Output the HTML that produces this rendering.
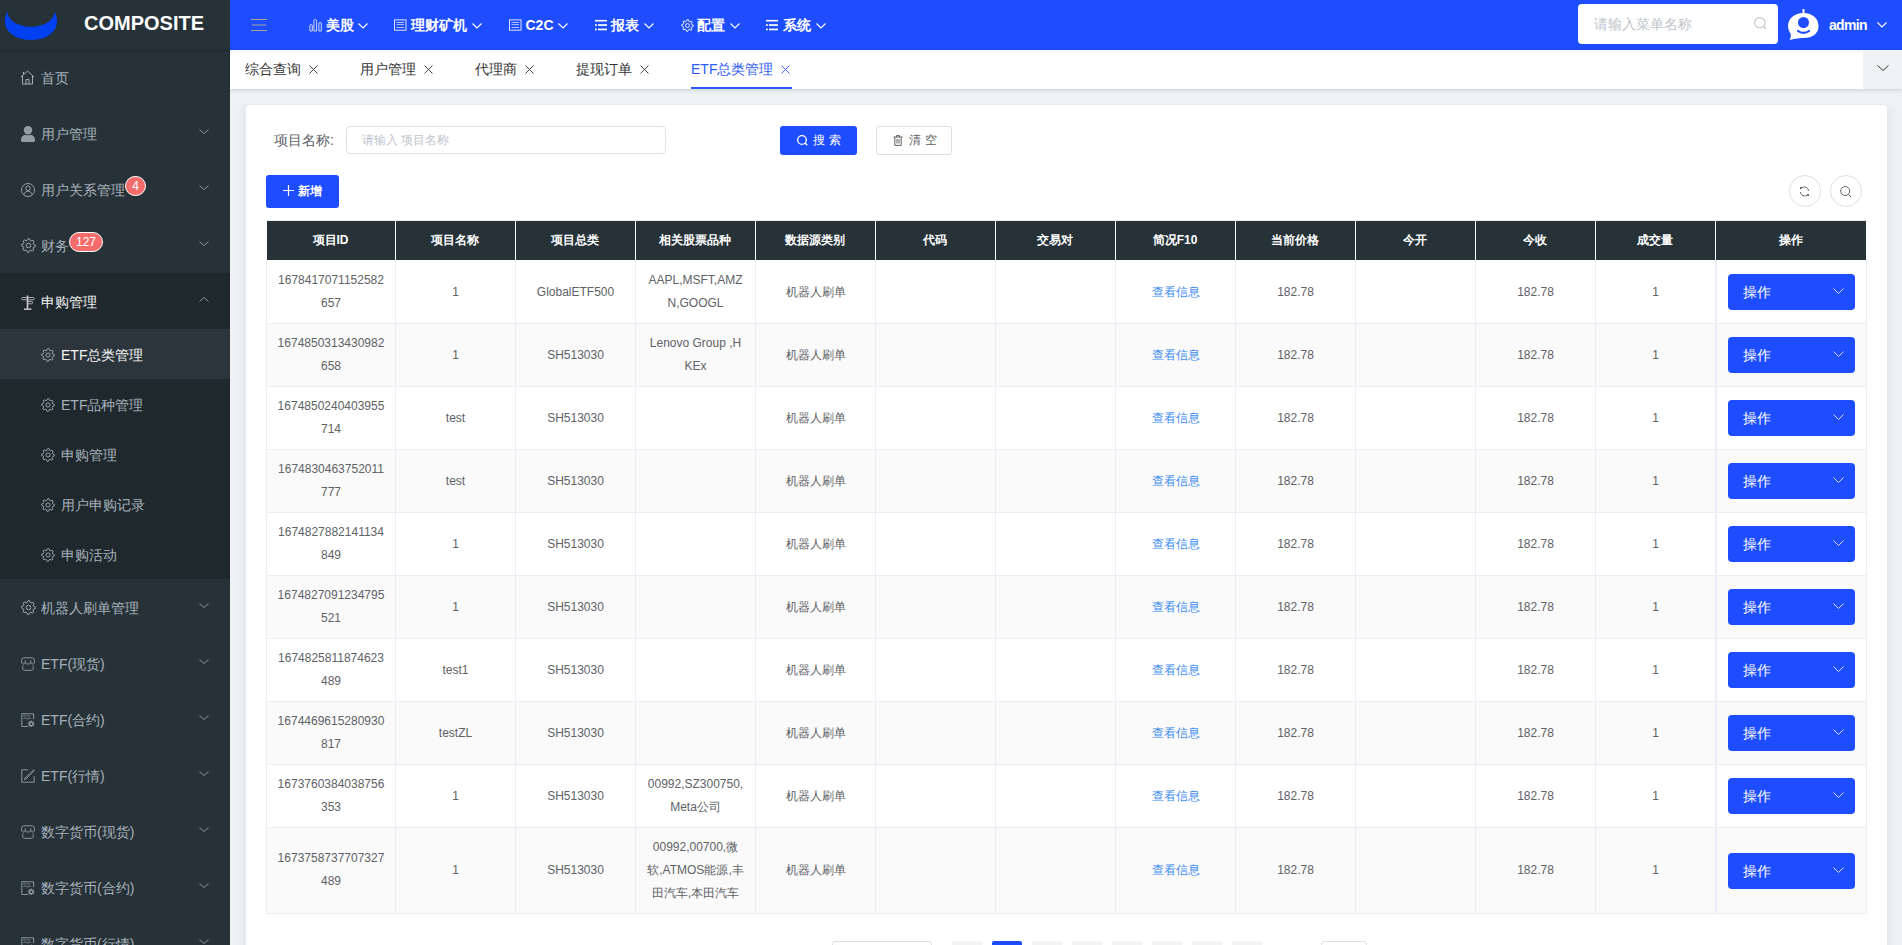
<!DOCTYPE html>
<html><head><meta charset="utf-8">
<style>
*{box-sizing:border-box;margin:0;padding:0}
html,body{width:1902px;height:945px;overflow:hidden;background:#eff2f4;font-family:"Liberation Sans",sans-serif;font-size:14px;color:#606266;position:relative}
.abs{position:absolute}
#side{position:absolute;left:0;top:0;width:230px;height:945px;background:#263238;overflow:hidden}
#logo{position:absolute;left:0;top:0;width:230px;height:50px;background:#263238;box-shadow:0 1px 1px rgba(0,0,0,.18);z-index:2}
#logo .t{position:absolute;left:84px;top:12px;font-size:20px;font-weight:bold;color:#fff}
.mi{position:absolute;left:0;width:230px;height:56px;line-height:56px;font-size:14px}
.mi .tx{position:absolute;left:41px;top:1px}
.smi{position:absolute;left:0;width:230px;height:50px;line-height:50px;font-size:14px}
.smi .tx{position:absolute;left:61px;top:1px}
.badge{position:absolute;height:20px;line-height:18px;border-radius:10px;background:#f56c6c;border:1px solid #fff;color:#fff;font-size:12px;text-align:center}
#hdr{position:absolute;left:230px;top:0;width:1672px;height:50px;background:#1e4dff}
.nav{position:absolute;top:0;height:50px;line-height:50px;color:#fff;font-weight:bold;font-size:14px}
#tabs{position:absolute;left:230px;top:50px;width:1672px;height:39px;background:#fff;box-shadow:0 1px 4px rgba(0,0,0,.15), inset 0 3px 3px -1px rgba(0,21,41,.04)}
.tab{position:absolute;top:50px;height:39px;line-height:39px;font-size:14px}
#cw{position:absolute;left:230px;top:104px;width:1672px;height:841px;overflow:hidden}
#card{position:absolute;left:15px;top:0;width:1643px;height:900px;background:#fff;border:1px solid #e6e9f2;border-radius:4px;box-shadow:0 2px 12px rgba(0,0,0,.08)}
.th{position:absolute;top:221px;height:39px;line-height:39px;text-align:center;color:#fff;font-weight:bold;font-size:12px}
.td{position:absolute;padding:1px 0 0 1px;display:flex;align-items:center;justify-content:center;text-align:center;font-size:12px;line-height:23px;color:#606266}
.opb{width:127px;height:36px;line-height:36px;background:#1e4dff;border-radius:4px;color:#fff;font-size:14px;padding-left:15px}
</style></head><body>
<div id="side">
<div id="logo"><svg class="abs" style="left:4px;top:11px" width="54" height="30" viewBox="0 0 54 30"><path d="M3.3 0.5 C1 6 0 11 2 16 C6 25 16 29 27 29 C38 29 48 25 52 16 C54 11 53 6 50.7 0.5 C50 7 45 12 38 14 C34 15.3 30 15.8 27 15.8 C24 15.8 20 15.3 16 14 C9 12 4 7 3.3 0.5Z" fill="#0040f0"/></svg><div class="t">COMPOSITE</div></div>
<div class="mi" style="top:49px;color:#a6b0ba"><span class="tx">首页</span></div>
<svg class="abs" style="left:20px;top:70px" width="15" height="15" viewBox="0 0 15 15"><path d="M1 7 L7.5 1 L14 7 M2.5 6 V14 H12.5 V6 M6 14 V9.5 H9 V14" fill="none" stroke="#a3acb4" stroke-width="1" stroke-linejoin="round"/><path d="M3.5 2 V4.5" stroke="#a3acb4" stroke-width="1.2"/></svg>
<div class="mi" style="top:105px;color:#a6b0ba"><span class="tx">用户管理</span></div>
<svg class="abs" style="left:21px;top:126px" width="14" height="16" viewBox="0 0 14 16"><circle cx="7" cy="4.3" r="4.2" fill="#949ca3"/><path d="M0 14.5 C0 10.5 2 9 4.5 8.7 C5.5 9.4 8.5 9.4 9.5 8.7 C12 9 14 10.5 14 14.5 C14 15.5 13 16 12 16 H2 C1 16 0 15.5 0 14.5Z" fill="#949ca3"/></svg>
<svg class="abs" style="left:199px;top:129px;overflow:visible" width="10" height="5" viewBox="0 0 10 5"><polyline points="0.5,0.5 5.0,4.5 9.5,0.5" fill="none" stroke="#8a949b" stroke-width="1"/></svg>
<div class="mi" style="top:161px;color:#a6b0ba"><span class="tx">用户关系管理</span></div>
<svg class="abs" style="left:21px;top:183px" width="14" height="14" viewBox="0 0 14 14"><circle cx="7" cy="7" r="6.5" fill="none" stroke="#a3acb4" stroke-width="0.9"/><circle cx="7" cy="5.3" r="2.3" fill="none" stroke="#a3acb4" stroke-width="0.9"/><path d="M2.8 11.8 C3.5 9.5 5 8.2 7 8.2 C9 8.2 10.5 9.5 11.2 11.8" fill="none" stroke="#a3acb4" stroke-width="0.9"/></svg>
<svg class="abs" style="left:199px;top:185px;overflow:visible" width="10" height="5" viewBox="0 0 10 5"><polyline points="0.5,0.5 5.0,4.5 9.5,0.5" fill="none" stroke="#8a949b" stroke-width="1"/></svg>
<div class="badge" style="left:125px;top:176px;width:21px">4</div>
<div class="mi" style="top:217px;color:#a6b0ba"><span class="tx">财务</span></div>
<svg class="abs" style="left:21px;top:238px" width="15" height="15" viewBox="0 0 15 15"><path d="M7.16 0.61 L8.51 0.67 L9.29 2.51 L10.22 2.95 L12.13 2.39 L13.04 3.39 L12.29 5.23 L12.64 6.21 L14.39 7.16 L14.33 8.51 L12.49 9.29 L12.05 10.22 L12.61 12.13 L11.61 13.04 L9.77 12.29 L8.79 12.64 L7.84 14.39 L6.49 14.33 L5.71 12.49 L4.78 12.05 L2.87 12.61 L1.96 11.61 L2.71 9.77 L2.36 8.79 L0.61 7.84 L0.67 6.49 L2.51 5.71 L2.95 4.78 L2.39 2.87 L3.39 1.96 L5.23 2.71 L6.21 2.36Z" fill="none" stroke="#a3acb4" stroke-width="1.0" stroke-linejoin="round"/><circle cx="7.5" cy="7.5" r="2.25" fill="none" stroke="#a3acb4" stroke-width="1.0"/></svg>
<svg class="abs" style="left:199px;top:241px;overflow:visible" width="10" height="5" viewBox="0 0 10 5"><polyline points="0.5,0.5 5.0,4.5 9.5,0.5" fill="none" stroke="#8a949b" stroke-width="1"/></svg>
<div class="badge" style="left:69px;top:232px;width:34px">127</div>
<div class="mi" style="top:273px;background:#1f282d;color:#f4f4f5"><span class="tx">申购管理</span></div>
<svg class="abs" style="left:21px;top:295px" width="14" height="15" viewBox="0 0 14 15"><path d="M6.5 0.5 V14" stroke="#c8cdd1" stroke-width="1.6"/><path d="M3 14.2 H10.5" stroke="#c8cdd1" stroke-width="1.4"/><path d="M6.5 2.5 H12 C14 2.5 14 4.8 12 4.8 H2 C0 4.8 0 2.5 2 2.5Z" fill="none" stroke="#b7bec3" stroke-width="0.9"/><path d="M6.5 6.5 H10.5 C12 6.5 12 8.8 10.5 8.8 H6.5" fill="none" stroke="#b7bec3" stroke-width="0.9"/></svg>
<svg class="abs" style="left:199px;top:297px;overflow:visible" width="10" height="5" viewBox="0 0 10 5"><polyline points="0.5,4.5 5.0,0.5 9.5,4.5" fill="none" stroke="#8a949b" stroke-width="1"/></svg>
<div class="smi" style="top:329px;background:#2b353b;color:#f4f4f5"><span class="tx">ETF总类管理</span></div>
<svg class="abs" style="left:41px;top:348px" width="14" height="14" viewBox="0 0 14 14"><path d="M6.69 0.61 L7.94 0.67 L8.62 2.48 L9.47 2.88 L11.30 2.26 L12.14 3.19 L11.34 4.95 L11.66 5.83 L13.39 6.69 L13.33 7.94 L11.52 8.62 L11.12 9.47 L11.74 11.30 L10.81 12.14 L9.05 11.34 L8.17 11.66 L7.31 13.39 L6.06 13.33 L5.38 11.52 L4.53 11.12 L2.70 11.74 L1.86 10.81 L2.66 9.05 L2.34 8.17 L0.61 7.31 L0.67 6.06 L2.48 5.38 L2.88 4.53 L2.26 2.70 L3.19 1.86 L4.95 2.66 L5.83 2.34Z" fill="none" stroke="#98a1a9" stroke-width="1.0" stroke-linejoin="round"/><circle cx="7.0" cy="7.0" r="2.10" fill="none" stroke="#98a1a9" stroke-width="1.0"/></svg>
<div class="smi" style="top:379px;background:#1f282d;color:#a6b0ba"><span class="tx">ETF品种管理</span></div>
<svg class="abs" style="left:41px;top:398px" width="14" height="14" viewBox="0 0 14 14"><path d="M6.69 0.61 L7.94 0.67 L8.62 2.48 L9.47 2.88 L11.30 2.26 L12.14 3.19 L11.34 4.95 L11.66 5.83 L13.39 6.69 L13.33 7.94 L11.52 8.62 L11.12 9.47 L11.74 11.30 L10.81 12.14 L9.05 11.34 L8.17 11.66 L7.31 13.39 L6.06 13.33 L5.38 11.52 L4.53 11.12 L2.70 11.74 L1.86 10.81 L2.66 9.05 L2.34 8.17 L0.61 7.31 L0.67 6.06 L2.48 5.38 L2.88 4.53 L2.26 2.70 L3.19 1.86 L4.95 2.66 L5.83 2.34Z" fill="none" stroke="#98a1a9" stroke-width="1.0" stroke-linejoin="round"/><circle cx="7.0" cy="7.0" r="2.10" fill="none" stroke="#98a1a9" stroke-width="1.0"/></svg>
<div class="smi" style="top:429px;background:#1f282d;color:#a6b0ba"><span class="tx">申购管理</span></div>
<svg class="abs" style="left:41px;top:448px" width="14" height="14" viewBox="0 0 14 14"><path d="M6.69 0.61 L7.94 0.67 L8.62 2.48 L9.47 2.88 L11.30 2.26 L12.14 3.19 L11.34 4.95 L11.66 5.83 L13.39 6.69 L13.33 7.94 L11.52 8.62 L11.12 9.47 L11.74 11.30 L10.81 12.14 L9.05 11.34 L8.17 11.66 L7.31 13.39 L6.06 13.33 L5.38 11.52 L4.53 11.12 L2.70 11.74 L1.86 10.81 L2.66 9.05 L2.34 8.17 L0.61 7.31 L0.67 6.06 L2.48 5.38 L2.88 4.53 L2.26 2.70 L3.19 1.86 L4.95 2.66 L5.83 2.34Z" fill="none" stroke="#98a1a9" stroke-width="1.0" stroke-linejoin="round"/><circle cx="7.0" cy="7.0" r="2.10" fill="none" stroke="#98a1a9" stroke-width="1.0"/></svg>
<div class="smi" style="top:479px;background:#1f282d;color:#a6b0ba"><span class="tx">用户申购记录</span></div>
<svg class="abs" style="left:41px;top:498px" width="14" height="14" viewBox="0 0 14 14"><path d="M6.69 0.61 L7.94 0.67 L8.62 2.48 L9.47 2.88 L11.30 2.26 L12.14 3.19 L11.34 4.95 L11.66 5.83 L13.39 6.69 L13.33 7.94 L11.52 8.62 L11.12 9.47 L11.74 11.30 L10.81 12.14 L9.05 11.34 L8.17 11.66 L7.31 13.39 L6.06 13.33 L5.38 11.52 L4.53 11.12 L2.70 11.74 L1.86 10.81 L2.66 9.05 L2.34 8.17 L0.61 7.31 L0.67 6.06 L2.48 5.38 L2.88 4.53 L2.26 2.70 L3.19 1.86 L4.95 2.66 L5.83 2.34Z" fill="none" stroke="#98a1a9" stroke-width="1.0" stroke-linejoin="round"/><circle cx="7.0" cy="7.0" r="2.10" fill="none" stroke="#98a1a9" stroke-width="1.0"/></svg>
<div class="smi" style="top:529px;background:#1f282d;color:#a6b0ba"><span class="tx">申购活动</span></div>
<svg class="abs" style="left:41px;top:548px" width="14" height="14" viewBox="0 0 14 14"><path d="M6.69 0.61 L7.94 0.67 L8.62 2.48 L9.47 2.88 L11.30 2.26 L12.14 3.19 L11.34 4.95 L11.66 5.83 L13.39 6.69 L13.33 7.94 L11.52 8.62 L11.12 9.47 L11.74 11.30 L10.81 12.14 L9.05 11.34 L8.17 11.66 L7.31 13.39 L6.06 13.33 L5.38 11.52 L4.53 11.12 L2.70 11.74 L1.86 10.81 L2.66 9.05 L2.34 8.17 L0.61 7.31 L0.67 6.06 L2.48 5.38 L2.88 4.53 L2.26 2.70 L3.19 1.86 L4.95 2.66 L5.83 2.34Z" fill="none" stroke="#98a1a9" stroke-width="1.0" stroke-linejoin="round"/><circle cx="7.0" cy="7.0" r="2.10" fill="none" stroke="#98a1a9" stroke-width="1.0"/></svg>
<div class="mi" style="top:579px;color:#a6b0ba"><span class="tx">机器人刷单管理</span></div>
<svg class="abs" style="left:21px;top:600px" width="15" height="15" viewBox="0 0 15 15"><path d="M7.16 0.61 L8.51 0.67 L9.29 2.51 L10.22 2.95 L12.13 2.39 L13.04 3.39 L12.29 5.23 L12.64 6.21 L14.39 7.16 L14.33 8.51 L12.49 9.29 L12.05 10.22 L12.61 12.13 L11.61 13.04 L9.77 12.29 L8.79 12.64 L7.84 14.39 L6.49 14.33 L5.71 12.49 L4.78 12.05 L2.87 12.61 L1.96 11.61 L2.71 9.77 L2.36 8.79 L0.61 7.84 L0.67 6.49 L2.51 5.71 L2.95 4.78 L2.39 2.87 L3.39 1.96 L5.23 2.71 L6.21 2.36Z" fill="none" stroke="#a3acb4" stroke-width="1.0" stroke-linejoin="round"/><circle cx="7.5" cy="7.5" r="2.25" fill="none" stroke="#a3acb4" stroke-width="1.0"/></svg>
<svg class="abs" style="left:199px;top:603px;overflow:visible" width="10" height="5" viewBox="0 0 10 5"><polyline points="0.5,0.5 5.0,4.5 9.5,0.5" fill="none" stroke="#8a949b" stroke-width="1"/></svg>
<div class="mi" style="top:635px;color:#a6b0ba"><span class="tx">ETF(现货)</span></div>
<svg class="abs" style="left:21px;top:657px" width="14" height="14" viewBox="0 0 14 14"><path d="M2.5 0.8 H11.5 C12.8 0.8 13.5 3 13.5 5 C13.5 6.5 12.5 7 11.5 7 C10.5 7 9.8 6.3 9.8 5.3 C9.8 6.5 8.5 7 7 7 C5.5 7 4.2 6.5 4.2 5.3 C4.2 6.3 3.5 7 2.5 7 C1.5 7 0.5 6.5 0.5 5 C0.5 3 1.2 0.8 2.5 0.8Z" fill="none" stroke="#8c959c" stroke-width="1"/><path d="M4.2 3.5 V5.3 M9.8 3.5 V5.3" stroke="#8c959c" stroke-width="1"/><path d="M1.8 8.5 V11.5 C1.8 12.7 2.5 13.3 3.5 13.3 H10.5 C11.5 13.3 12.2 12.7 12.2 11.5 V8.5" fill="none" stroke="#8c959c" stroke-width="1"/></svg>
<svg class="abs" style="left:199px;top:659px;overflow:visible" width="10" height="5" viewBox="0 0 10 5"><polyline points="0.5,0.5 5.0,4.5 9.5,0.5" fill="none" stroke="#8a949b" stroke-width="1"/></svg>
<div class="mi" style="top:691px;color:#a6b0ba"><span class="tx">ETF(合约)</span></div>
<svg class="abs" style="left:21px;top:713px" width="14" height="14" viewBox="0 0 14 14"><path d="M7 13.5 H0.8 V0.8 H12.6 V6.2" fill="none" stroke="#8c959c" stroke-width="1"/><text x="1.9" y="5.6" font-size="5.2" font-family="Liberation Sans" fill="#8c959c" textLength="8.5" lengthAdjust="spacingAndGlyphs">SQL</text><path d="M10.03 7.40 L10.70 7.44 L11.04 8.45 L11.49 8.66 L12.48 8.28 L12.93 8.77 L12.46 9.73 L12.63 10.19 L13.60 10.63 L13.56 11.30 L12.55 11.64 L12.34 12.09 L12.72 13.08 L12.23 13.53 L11.27 13.06 L10.81 13.23 L10.37 14.20 L9.70 14.16 L9.36 13.15 L8.91 12.94 L7.92 13.32 L7.47 12.83 L7.94 11.87 L7.77 11.41 L6.80 10.97 L6.84 10.30 L7.85 9.96 L8.06 9.51 L7.68 8.52 L8.17 8.07 L9.13 8.54 L9.59 8.37Z" fill="#8c959c"/><circle cx="10.2" cy="10.8" r="1.1" fill="#263238"/></svg>
<svg class="abs" style="left:199px;top:715px;overflow:visible" width="10" height="5" viewBox="0 0 10 5"><polyline points="0.5,0.5 5.0,4.5 9.5,0.5" fill="none" stroke="#8a949b" stroke-width="1"/></svg>
<div class="mi" style="top:747px;color:#a6b0ba"><span class="tx">ETF(行情)</span></div>
<svg class="abs" style="left:21px;top:769px" width="14" height="14" viewBox="0 0 14 14"><path d="M7 0.8 H0.8 V13.2 H13.2 V7" fill="none" stroke="#8c959c" stroke-width="1"/><path d="M12.8 0.8 L13.3 1.5 L5 10 L3.5 10.5 L4 9 Z" fill="none" stroke="#8c959c" stroke-width="1" stroke-linejoin="round"/></svg>
<svg class="abs" style="left:199px;top:771px;overflow:visible" width="10" height="5" viewBox="0 0 10 5"><polyline points="0.5,0.5 5.0,4.5 9.5,0.5" fill="none" stroke="#8a949b" stroke-width="1"/></svg>
<div class="mi" style="top:803px;color:#a6b0ba"><span class="tx">数字货币(现货)</span></div>
<svg class="abs" style="left:21px;top:825px" width="14" height="14" viewBox="0 0 14 14"><path d="M2.5 0.8 H11.5 C12.8 0.8 13.5 3 13.5 5 C13.5 6.5 12.5 7 11.5 7 C10.5 7 9.8 6.3 9.8 5.3 C9.8 6.5 8.5 7 7 7 C5.5 7 4.2 6.5 4.2 5.3 C4.2 6.3 3.5 7 2.5 7 C1.5 7 0.5 6.5 0.5 5 C0.5 3 1.2 0.8 2.5 0.8Z" fill="none" stroke="#8c959c" stroke-width="1"/><path d="M4.2 3.5 V5.3 M9.8 3.5 V5.3" stroke="#8c959c" stroke-width="1"/><path d="M1.8 8.5 V11.5 C1.8 12.7 2.5 13.3 3.5 13.3 H10.5 C11.5 13.3 12.2 12.7 12.2 11.5 V8.5" fill="none" stroke="#8c959c" stroke-width="1"/></svg>
<svg class="abs" style="left:199px;top:827px;overflow:visible" width="10" height="5" viewBox="0 0 10 5"><polyline points="0.5,0.5 5.0,4.5 9.5,0.5" fill="none" stroke="#8a949b" stroke-width="1"/></svg>
<div class="mi" style="top:859px;color:#a6b0ba"><span class="tx">数字货币(合约)</span></div>
<svg class="abs" style="left:21px;top:881px" width="14" height="14" viewBox="0 0 14 14"><path d="M7 13.5 H0.8 V0.8 H12.6 V6.2" fill="none" stroke="#8c959c" stroke-width="1"/><text x="1.9" y="5.6" font-size="5.2" font-family="Liberation Sans" fill="#8c959c" textLength="8.5" lengthAdjust="spacingAndGlyphs">SQL</text><path d="M10.03 7.40 L10.70 7.44 L11.04 8.45 L11.49 8.66 L12.48 8.28 L12.93 8.77 L12.46 9.73 L12.63 10.19 L13.60 10.63 L13.56 11.30 L12.55 11.64 L12.34 12.09 L12.72 13.08 L12.23 13.53 L11.27 13.06 L10.81 13.23 L10.37 14.20 L9.70 14.16 L9.36 13.15 L8.91 12.94 L7.92 13.32 L7.47 12.83 L7.94 11.87 L7.77 11.41 L6.80 10.97 L6.84 10.30 L7.85 9.96 L8.06 9.51 L7.68 8.52 L8.17 8.07 L9.13 8.54 L9.59 8.37Z" fill="#8c959c"/><circle cx="10.2" cy="10.8" r="1.1" fill="#263238"/></svg>
<svg class="abs" style="left:199px;top:883px;overflow:visible" width="10" height="5" viewBox="0 0 10 5"><polyline points="0.5,0.5 5.0,4.5 9.5,0.5" fill="none" stroke="#8a949b" stroke-width="1"/></svg>
<div class="mi" style="top:915px;color:#a6b0ba"><span class="tx">数字货币(行情)</span></div>
<svg class="abs" style="left:21px;top:937px" width="14" height="14" viewBox="0 0 14 14"><path d="M7 13.5 H0.8 V0.8 H12.6 V6.2" fill="none" stroke="#8c959c" stroke-width="1"/><text x="1.9" y="5.6" font-size="5.2" font-family="Liberation Sans" fill="#8c959c" textLength="8.5" lengthAdjust="spacingAndGlyphs">SQL</text><path d="M10.03 7.40 L10.70 7.44 L11.04 8.45 L11.49 8.66 L12.48 8.28 L12.93 8.77 L12.46 9.73 L12.63 10.19 L13.60 10.63 L13.56 11.30 L12.55 11.64 L12.34 12.09 L12.72 13.08 L12.23 13.53 L11.27 13.06 L10.81 13.23 L10.37 14.20 L9.70 14.16 L9.36 13.15 L8.91 12.94 L7.92 13.32 L7.47 12.83 L7.94 11.87 L7.77 11.41 L6.80 10.97 L6.84 10.30 L7.85 9.96 L8.06 9.51 L7.68 8.52 L8.17 8.07 L9.13 8.54 L9.59 8.37Z" fill="#8c959c"/><circle cx="10.2" cy="10.8" r="1.1" fill="#263238"/></svg>
<svg class="abs" style="left:199px;top:939px;overflow:visible" width="10" height="5" viewBox="0 0 10 5"><polyline points="0.5,0.5 5.0,4.5 9.5,0.5" fill="none" stroke="#8a949b" stroke-width="1"/></svg>
</div>
<div id="hdr"></div>
<svg class="abs" style="left:251px;top:18px" width="16" height="14" viewBox="0 0 16 14"><path d="M0 1.5 H16 M1 7 H15 M0 12.5 H16" stroke="#a8a49a" stroke-width="1"/></svg>
<svg class="abs" style="left:308.5px;top:19px" width="14" height="13" viewBox="0 0 14 13"><path d="M0.9 12 V6.5 C0.9 5.3 3.3 5.3 3.3 6.5 V12Z" fill="none" stroke="#fff" stroke-width="0.9" stroke-opacity="0.85"/><path d="M4.9 12 V1.6 C4.9 0.2 7.6 0.2 7.6 1.6 V12Z" fill="none" stroke="#fff" stroke-width="0.9" stroke-opacity="0.85"/><path d="M9.9 12 V4 L11.1 3.3 L12.3 4 V12Z" fill="none" stroke="#fff" stroke-width="0.9" stroke-opacity="0.85"/></svg>
<div class="nav" style="left:325.5px">美股</div>
<svg class="abs" style="left:394px;top:19px" width="13" height="12" viewBox="0 0 13 12"><rect x="0.5" y="0.9" width="11.5" height="10.3" fill="none" stroke="#fff" stroke-width="1" stroke-opacity="0.85"/><path d="M2.5 3.5 H10 M2.5 5.6 H10 M2.5 8.5 H10" stroke="#fff" stroke-width="0.9" stroke-opacity="0.75"/></svg>
<div class="nav" style="left:411px">理财矿机</div>
<svg class="abs" style="left:509px;top:19px" width="13" height="12" viewBox="0 0 13 12"><rect x="0.5" y="0.9" width="11.5" height="10.3" fill="none" stroke="#fff" stroke-width="1" stroke-opacity="0.85"/><path d="M2.5 3.5 H10 M2.5 5.6 H10 M2.5 8.5 H10" stroke="#fff" stroke-width="0.9" stroke-opacity="0.75"/></svg>
<div class="nav" style="left:525.5px">C2C</div>
<svg class="abs" style="left:594px;top:19px" width="14" height="12" viewBox="0 0 14 12"><rect x="1" y="0.9" width="12" height="1.6" fill="#fff"/><rect x="1" y="5.2" width="1.8" height="1.7" fill="#fff"/><rect x="4" y="5.2" width="9" height="1.7" fill="#fff"/><rect x="1" y="9.6" width="1.8" height="1.7" fill="#fff"/><rect x="4" y="9.6" width="9" height="1.7" fill="#fff"/></svg>
<div class="nav" style="left:611px">报表</div>
<svg class="abs" style="left:680.5px;top:18.5px" width="13" height="13" viewBox="0 0 13 13"><path d="M6.21 0.61 L7.37 0.66 L7.95 2.45 L8.71 2.81 L10.46 2.13 L11.24 2.99 L10.39 4.66 L10.67 5.46 L12.39 6.21 L12.34 7.37 L10.55 7.95 L10.19 8.71 L10.87 10.46 L10.01 11.24 L8.34 10.39 L7.54 10.67 L6.79 12.39 L5.63 12.34 L5.05 10.55 L4.29 10.19 L2.54 10.87 L1.76 10.01 L2.61 8.34 L2.33 7.54 L0.61 6.79 L0.66 5.63 L2.45 5.05 L2.81 4.29 L2.13 2.54 L2.99 1.76 L4.66 2.61 L5.46 2.33Z" fill="none" stroke="#fff" stroke-width="0.9" stroke-linejoin="round"/><circle cx="6.5" cy="6.5" r="1.95" fill="none" stroke="#fff" stroke-width="0.9"/></svg>
<div class="nav" style="left:697px">配置</div>
<svg class="abs" style="left:765px;top:19px" width="14" height="12" viewBox="0 0 14 12"><rect x="1" y="0.9" width="12" height="1.6" fill="#fff"/><rect x="1" y="5.2" width="1.8" height="1.7" fill="#fff"/><rect x="4" y="5.2" width="9" height="1.7" fill="#fff"/><rect x="1" y="9.6" width="1.8" height="1.7" fill="#fff"/><rect x="4" y="9.6" width="9" height="1.7" fill="#fff"/></svg>
<div class="nav" style="left:783px">系统</div>
<svg class="abs" style="left:358px;top:23px;overflow:visible" width="10" height="5.5" viewBox="0 0 10 5.5"><polyline points="0.5,0.5 5.0,5.0 9.5,0.5" fill="none" stroke="#fff" stroke-width="1.1"/></svg>
<svg class="abs" style="left:472px;top:23px;overflow:visible" width="10" height="5.5" viewBox="0 0 10 5.5"><polyline points="0.5,0.5 5.0,5.0 9.5,0.5" fill="none" stroke="#fff" stroke-width="1.1"/></svg>
<svg class="abs" style="left:558px;top:23px;overflow:visible" width="10" height="5.5" viewBox="0 0 10 5.5"><polyline points="0.5,0.5 5.0,5.0 9.5,0.5" fill="none" stroke="#fff" stroke-width="1.1"/></svg>
<svg class="abs" style="left:644px;top:23px;overflow:visible" width="10" height="5.5" viewBox="0 0 10 5.5"><polyline points="0.5,0.5 5.0,5.0 9.5,0.5" fill="none" stroke="#fff" stroke-width="1.1"/></svg>
<svg class="abs" style="left:729.5px;top:23px;overflow:visible" width="10" height="5.5" viewBox="0 0 10 5.5"><polyline points="0.5,0.5 5.0,5.0 9.5,0.5" fill="none" stroke="#fff" stroke-width="1.1"/></svg>
<svg class="abs" style="left:815.5px;top:23px;overflow:visible" width="10" height="5.5" viewBox="0 0 10 5.5"><polyline points="0.5,0.5 5.0,5.0 9.5,0.5" fill="none" stroke="#fff" stroke-width="1.1"/></svg>
<div class="abs" style="left:1578px;top:4px;width:200px;height:40px;background:#fff;border-radius:4px"></div>
<div class="abs" style="left:1594px;top:4px;height:40px;line-height:40px;color:#c0c4cc;font-size:14px">请输入菜单名称</div>
<svg class="abs" style="left:1754px;top:17px" width="13" height="13" viewBox="0 0 13 13"><circle cx="5.8" cy="5.8" r="5.2" fill="none" stroke="#c0c4cc" stroke-width="1.1"/><path d="M9.5 9.5 L12 12" stroke="#c0c4cc" stroke-width="1.1"/></svg>
<svg class="abs" style="left:1787px;top:8px" width="33" height="33" viewBox="0 0 33 33"><path d="M16.5 1 V6" stroke="#fff" stroke-width="2"/><path d="M16.5 5 C25.5 5 31.5 10.5 31.5 18 C31.5 26 25 30 17 30 C13 30 9 30.5 2.5 32 C4 29.5 4.2 27.5 3.5 25.5 C2 23 1 20.5 1 18 C1 10.5 7.5 5 16.5 5Z" fill="#fff"/><circle cx="16.5" cy="14.5" r="5.5" fill="#1e4dff"/><path d="M11 23 C14 25.5 19 25.5 22 23" fill="none" stroke="#1e4dff" stroke-width="2.2" stroke-linecap="round"/></svg>
<div class="abs" style="left:1829px;top:1px;height:48px;line-height:48px;color:#fff;font-size:14px;font-weight:bold;letter-spacing:-0.7px">admin</div>
<svg class="abs" style="left:1877px;top:22px;overflow:visible" width="10" height="5.5" viewBox="0 0 10 5.5"><polyline points="0.5,0.5 5.0,5.0 9.5,0.5" fill="none" stroke="#fff" stroke-width="1.1"/></svg>
<div id="tabs"></div>
<div class="tab" style="left:245px;color:#333">综合查询</div>
<svg class="abs" style="left:309px;top:65px" width="9" height="9" viewBox="0 0 9 9"><path d="M0.5 0.5 L8.5 8.5 M8.5 0.5 L0.5 8.5" stroke="#333" stroke-width="0.9"/></svg>
<div class="tab" style="left:360px;color:#333">用户管理</div>
<svg class="abs" style="left:424px;top:65px" width="9" height="9" viewBox="0 0 9 9"><path d="M0.5 0.5 L8.5 8.5 M8.5 0.5 L0.5 8.5" stroke="#333" stroke-width="0.9"/></svg>
<div class="tab" style="left:475px;color:#333">代理商</div>
<svg class="abs" style="left:525px;top:65px" width="9" height="9" viewBox="0 0 9 9"><path d="M0.5 0.5 L8.5 8.5 M8.5 0.5 L0.5 8.5" stroke="#333" stroke-width="0.9"/></svg>
<div class="tab" style="left:576px;color:#333">提现订单</div>
<svg class="abs" style="left:640px;top:65px" width="9" height="9" viewBox="0 0 9 9"><path d="M0.5 0.5 L8.5 8.5 M8.5 0.5 L0.5 8.5" stroke="#333" stroke-width="0.9"/></svg>
<div class="tab" style="left:691px;color:#2d5bf6">ETF总类管理</div>
<svg class="abs" style="left:781px;top:65px" width="9" height="9" viewBox="0 0 9 9"><path d="M0.5 0.5 L8.5 8.5 M8.5 0.5 L0.5 8.5" stroke="#2d5bf6" stroke-width="0.9"/></svg>
<div class="abs" style="left:691px;top:87px;width:101px;height:2px;background:#2d5bf6"></div>
<div class="abs" style="left:1863px;top:50px;width:39px;height:39px;background:#eff2f4"></div>
<svg class="abs" style="left:1877px;top:65px;overflow:visible" width="12" height="6" viewBox="0 0 12 6"><polyline points="0.5,0.5 6.0,5.5 11.5,0.5" fill="none" stroke="#333" stroke-width="1"/></svg>
<div id="cw"><div id="card"></div></div>
<div class="abs" style="left:274px;top:126px;height:28px;line-height:28px;font-size:14px;color:#606266">项目名称:</div>
<div class="abs" style="left:346px;top:126px;width:320px;height:28px;border:1px solid #dcdfe6;border-radius:4px"></div>
<div class="abs" style="left:362px;top:126px;height:28px;line-height:28px;font-size:12px;color:#c0c4cc">请输入 项目名称</div>
<div class="abs" style="left:780px;top:126px;width:77px;height:29px;background:#1e4dff;border-radius:3px"></div>
<svg class="abs" style="left:797px;top:135px" width="11" height="11" viewBox="0 0 11 11"><circle cx="5" cy="5" r="4.3" fill="none" stroke="#fff" stroke-width="1.3"/><path d="M8 8 L10.3 10.3" stroke="#fff" stroke-width="1.3"/></svg>
<div class="abs" style="left:813px;top:126px;height:29px;line-height:29px;font-size:12px;color:#fff;letter-spacing:4px">搜索</div>
<div class="abs" style="left:876px;top:126px;width:76px;height:29px;border:1px solid #dcdfe6;border-radius:3px;background:#fff"></div>
<svg class="abs" style="left:893px;top:135px" width="10" height="11" viewBox="0 0 10 11"><path d="M0.5 2 H9.5 M3.5 2 V0.6 H6.5 V2 M1.8 2 V10.4 H8.2 V2 M4 4 V8.5 M6 4 V8.5" fill="none" stroke="#606266" stroke-width="1"/></svg>
<div class="abs" style="left:909px;top:126px;height:29px;line-height:29px;font-size:12px;color:#606266;letter-spacing:4px">清空</div>
<div class="abs" style="left:266px;top:175px;width:73px;height:33px;background:#1e4dff;border-radius:3px"></div>
<svg class="abs" style="left:283px;top:185px" width="11" height="11" viewBox="0 0 11 11"><path d="M5.5 0 V11 M0 5.5 H11" stroke="#fff" stroke-width="1.2"/></svg>
<div class="abs" style="left:298px;top:175px;height:33px;line-height:33px;font-size:12px;color:#fff;font-weight:bold">新增</div>
<div class="abs" style="left:1789px;top:175px;width:32px;height:32px;border:1px solid #dcdfe6;border-radius:50%;background:#fff"></div>
<div class="abs" style="left:1830px;top:175px;width:32px;height:32px;border:1px solid #dcdfe6;border-radius:50%;background:#fff"></div>
<svg class="abs" style="left:1799px;top:186px" width="11" height="11" viewBox="0 0 11 11"><path d="M2 3 C3 1.5 4 1 5.5 1 C7.8 1 9.5 2.8 9.5 5" fill="none" stroke="#606266" stroke-width="1"/><path d="M9 8 C8 9.5 7 10 5.5 10 C3.2 10 1.5 8.2 1.5 6" fill="none" stroke="#606266" stroke-width="1"/><path d="M1 1 L3.5 1 L1 3.5Z M10 10 L7.5 10 L10 7.5Z" fill="#606266"/></svg>
<svg class="abs" style="left:1840px;top:186px" width="12" height="11" viewBox="0 0 12 11"><circle cx="5.2" cy="5" r="4.5" fill="none" stroke="#606266" stroke-width="1"/><path d="M8.5 8.5 L11 10.8" stroke="#606266" stroke-width="1"/></svg>
<div class="abs" style="left:266px;top:220px;width:1601px;height:1px;background:#ebeef5"></div>
<div class="abs" style="left:267px;top:221px;width:1599px;height:39px;background:#263238"></div>
<div class="th" style="left:266px;width:129px">项目ID</div>
<div class="th" style="left:395px;width:120px">项目名称</div>
<div class="abs" style="left:395px;top:221px;width:1px;height:39px;background:#fff"></div>
<div class="th" style="left:515px;width:120px">项目总类</div>
<div class="abs" style="left:515px;top:221px;width:1px;height:39px;background:#fff"></div>
<div class="th" style="left:635px;width:120px">相关股票品种</div>
<div class="abs" style="left:635px;top:221px;width:1px;height:39px;background:#fff"></div>
<div class="th" style="left:755px;width:120px">数据源类别</div>
<div class="abs" style="left:755px;top:221px;width:1px;height:39px;background:#fff"></div>
<div class="th" style="left:875px;width:120px">代码</div>
<div class="abs" style="left:875px;top:221px;width:1px;height:39px;background:#fff"></div>
<div class="th" style="left:995px;width:120px">交易对</div>
<div class="abs" style="left:995px;top:221px;width:1px;height:39px;background:#fff"></div>
<div class="th" style="left:1115px;width:120px">简况F10</div>
<div class="abs" style="left:1115px;top:221px;width:1px;height:39px;background:#fff"></div>
<div class="th" style="left:1235px;width:120px">当前价格</div>
<div class="abs" style="left:1235px;top:221px;width:1px;height:39px;background:#fff"></div>
<div class="th" style="left:1355px;width:120px">今开</div>
<div class="abs" style="left:1355px;top:221px;width:1px;height:39px;background:#fff"></div>
<div class="th" style="left:1475px;width:120px">今收</div>
<div class="abs" style="left:1475px;top:221px;width:1px;height:39px;background:#fff"></div>
<div class="th" style="left:1595px;width:120px">成交量</div>
<div class="abs" style="left:1595px;top:221px;width:1px;height:39px;background:#fff"></div>
<div class="th" style="left:1715px;width:151px">操作</div>
<div class="abs" style="left:1715px;top:221px;width:1px;height:39px;background:#fff"></div>
<div class="abs" style="left:266px;top:260px;width:1601px;height:64px;background:#fff;border-bottom:1px solid #ebeef5"></div>
<div class="td" style="left:266px;top:260px;width:129px;height:63px"><div>1678417071152582<br>657</div></div>
<div class="td" style="left:395px;top:260px;width:120px;height:63px"><div>1</div></div>
<div class="td" style="left:515px;top:260px;width:120px;height:63px"><div>GlobalETF500</div></div>
<div class="td" style="left:635px;top:260px;width:120px;height:63px"><div>AAPL,MSFT,AMZ<br>N,GOOGL</div></div>
<div class="td" style="left:755px;top:260px;width:120px;height:63px"><div>机器人刷单</div></div>
<div class="td" style="left:875px;top:260px;width:120px;height:63px"><div></div></div>
<div class="td" style="left:995px;top:260px;width:120px;height:63px"><div></div></div>
<div class="td" style="left:1115px;top:260px;width:120px;height:63px"><div><span style="color:#3d8cf0">查看信息</span></div></div>
<div class="td" style="left:1235px;top:260px;width:120px;height:63px"><div>182.78</div></div>
<div class="td" style="left:1355px;top:260px;width:120px;height:63px"><div></div></div>
<div class="td" style="left:1475px;top:260px;width:120px;height:63px"><div>182.78</div></div>
<div class="td" style="left:1595px;top:260px;width:120px;height:63px"><div>1</div></div>
<div class="abs opb" style="left:1728px;top:274px">操作</div>
<svg class="abs" style="left:1833px;top:288px;overflow:visible" width="11" height="6" viewBox="0 0 11 6"><polyline points="0.5,0.5 5.5,5.5 10.5,0.5" fill="none" stroke="#d8dcff" stroke-width="1"/></svg>
<div class="abs" style="left:266px;top:324px;width:1601px;height:63px;background:#fafafa;border-bottom:1px solid #ebeef5"></div>
<div class="td" style="left:266px;top:323px;width:129px;height:62px"><div>1674850313430982<br>658</div></div>
<div class="td" style="left:395px;top:324px;width:120px;height:62px"><div>1</div></div>
<div class="td" style="left:515px;top:324px;width:120px;height:62px"><div>SH513030</div></div>
<div class="td" style="left:635px;top:323px;width:120px;height:62px"><div>Lenovo Group ,H<br>KEx</div></div>
<div class="td" style="left:755px;top:324px;width:120px;height:62px"><div>机器人刷单</div></div>
<div class="td" style="left:875px;top:324px;width:120px;height:62px"><div></div></div>
<div class="td" style="left:995px;top:324px;width:120px;height:62px"><div></div></div>
<div class="td" style="left:1115px;top:324px;width:120px;height:62px"><div><span style="color:#3d8cf0">查看信息</span></div></div>
<div class="td" style="left:1235px;top:324px;width:120px;height:62px"><div>182.78</div></div>
<div class="td" style="left:1355px;top:324px;width:120px;height:62px"><div></div></div>
<div class="td" style="left:1475px;top:324px;width:120px;height:62px"><div>182.78</div></div>
<div class="td" style="left:1595px;top:324px;width:120px;height:62px"><div>1</div></div>
<div class="abs opb" style="left:1728px;top:337px">操作</div>
<svg class="abs" style="left:1833px;top:351px;overflow:visible" width="11" height="6" viewBox="0 0 11 6"><polyline points="0.5,0.5 5.5,5.5 10.5,0.5" fill="none" stroke="#d8dcff" stroke-width="1"/></svg>
<div class="abs" style="left:266px;top:387px;width:1601px;height:63px;background:#fff;border-bottom:1px solid #ebeef5"></div>
<div class="td" style="left:266px;top:386px;width:129px;height:62px"><div>1674850240403955<br>714</div></div>
<div class="td" style="left:395px;top:387px;width:120px;height:62px"><div>test</div></div>
<div class="td" style="left:515px;top:387px;width:120px;height:62px"><div>SH513030</div></div>
<div class="td" style="left:635px;top:387px;width:120px;height:62px"><div></div></div>
<div class="td" style="left:755px;top:387px;width:120px;height:62px"><div>机器人刷单</div></div>
<div class="td" style="left:875px;top:387px;width:120px;height:62px"><div></div></div>
<div class="td" style="left:995px;top:387px;width:120px;height:62px"><div></div></div>
<div class="td" style="left:1115px;top:387px;width:120px;height:62px"><div><span style="color:#3d8cf0">查看信息</span></div></div>
<div class="td" style="left:1235px;top:387px;width:120px;height:62px"><div>182.78</div></div>
<div class="td" style="left:1355px;top:387px;width:120px;height:62px"><div></div></div>
<div class="td" style="left:1475px;top:387px;width:120px;height:62px"><div>182.78</div></div>
<div class="td" style="left:1595px;top:387px;width:120px;height:62px"><div>1</div></div>
<div class="abs opb" style="left:1728px;top:400px">操作</div>
<svg class="abs" style="left:1833px;top:414px;overflow:visible" width="11" height="6" viewBox="0 0 11 6"><polyline points="0.5,0.5 5.5,5.5 10.5,0.5" fill="none" stroke="#d8dcff" stroke-width="1"/></svg>
<div class="abs" style="left:266px;top:450px;width:1601px;height:63px;background:#fafafa;border-bottom:1px solid #ebeef5"></div>
<div class="td" style="left:266px;top:449px;width:129px;height:62px"><div>1674830463752011<br>777</div></div>
<div class="td" style="left:395px;top:450px;width:120px;height:62px"><div>test</div></div>
<div class="td" style="left:515px;top:450px;width:120px;height:62px"><div>SH513030</div></div>
<div class="td" style="left:635px;top:450px;width:120px;height:62px"><div></div></div>
<div class="td" style="left:755px;top:450px;width:120px;height:62px"><div>机器人刷单</div></div>
<div class="td" style="left:875px;top:450px;width:120px;height:62px"><div></div></div>
<div class="td" style="left:995px;top:450px;width:120px;height:62px"><div></div></div>
<div class="td" style="left:1115px;top:450px;width:120px;height:62px"><div><span style="color:#3d8cf0">查看信息</span></div></div>
<div class="td" style="left:1235px;top:450px;width:120px;height:62px"><div>182.78</div></div>
<div class="td" style="left:1355px;top:450px;width:120px;height:62px"><div></div></div>
<div class="td" style="left:1475px;top:450px;width:120px;height:62px"><div>182.78</div></div>
<div class="td" style="left:1595px;top:450px;width:120px;height:62px"><div>1</div></div>
<div class="abs opb" style="left:1728px;top:463px">操作</div>
<svg class="abs" style="left:1833px;top:477px;overflow:visible" width="11" height="6" viewBox="0 0 11 6"><polyline points="0.5,0.5 5.5,5.5 10.5,0.5" fill="none" stroke="#d8dcff" stroke-width="1"/></svg>
<div class="abs" style="left:266px;top:513px;width:1601px;height:63px;background:#fff;border-bottom:1px solid #ebeef5"></div>
<div class="td" style="left:266px;top:512px;width:129px;height:62px"><div>1674827882141134<br>849</div></div>
<div class="td" style="left:395px;top:513px;width:120px;height:62px"><div>1</div></div>
<div class="td" style="left:515px;top:513px;width:120px;height:62px"><div>SH513030</div></div>
<div class="td" style="left:635px;top:513px;width:120px;height:62px"><div></div></div>
<div class="td" style="left:755px;top:513px;width:120px;height:62px"><div>机器人刷单</div></div>
<div class="td" style="left:875px;top:513px;width:120px;height:62px"><div></div></div>
<div class="td" style="left:995px;top:513px;width:120px;height:62px"><div></div></div>
<div class="td" style="left:1115px;top:513px;width:120px;height:62px"><div><span style="color:#3d8cf0">查看信息</span></div></div>
<div class="td" style="left:1235px;top:513px;width:120px;height:62px"><div>182.78</div></div>
<div class="td" style="left:1355px;top:513px;width:120px;height:62px"><div></div></div>
<div class="td" style="left:1475px;top:513px;width:120px;height:62px"><div>182.78</div></div>
<div class="td" style="left:1595px;top:513px;width:120px;height:62px"><div>1</div></div>
<div class="abs opb" style="left:1728px;top:526px">操作</div>
<svg class="abs" style="left:1833px;top:540px;overflow:visible" width="11" height="6" viewBox="0 0 11 6"><polyline points="0.5,0.5 5.5,5.5 10.5,0.5" fill="none" stroke="#d8dcff" stroke-width="1"/></svg>
<div class="abs" style="left:266px;top:576px;width:1601px;height:63px;background:#fafafa;border-bottom:1px solid #ebeef5"></div>
<div class="td" style="left:266px;top:575px;width:129px;height:62px"><div>1674827091234795<br>521</div></div>
<div class="td" style="left:395px;top:576px;width:120px;height:62px"><div>1</div></div>
<div class="td" style="left:515px;top:576px;width:120px;height:62px"><div>SH513030</div></div>
<div class="td" style="left:635px;top:576px;width:120px;height:62px"><div></div></div>
<div class="td" style="left:755px;top:576px;width:120px;height:62px"><div>机器人刷单</div></div>
<div class="td" style="left:875px;top:576px;width:120px;height:62px"><div></div></div>
<div class="td" style="left:995px;top:576px;width:120px;height:62px"><div></div></div>
<div class="td" style="left:1115px;top:576px;width:120px;height:62px"><div><span style="color:#3d8cf0">查看信息</span></div></div>
<div class="td" style="left:1235px;top:576px;width:120px;height:62px"><div>182.78</div></div>
<div class="td" style="left:1355px;top:576px;width:120px;height:62px"><div></div></div>
<div class="td" style="left:1475px;top:576px;width:120px;height:62px"><div>182.78</div></div>
<div class="td" style="left:1595px;top:576px;width:120px;height:62px"><div>1</div></div>
<div class="abs opb" style="left:1728px;top:589px">操作</div>
<svg class="abs" style="left:1833px;top:603px;overflow:visible" width="11" height="6" viewBox="0 0 11 6"><polyline points="0.5,0.5 5.5,5.5 10.5,0.5" fill="none" stroke="#d8dcff" stroke-width="1"/></svg>
<div class="abs" style="left:266px;top:639px;width:1601px;height:63px;background:#fff;border-bottom:1px solid #ebeef5"></div>
<div class="td" style="left:266px;top:638px;width:129px;height:62px"><div>1674825811874623<br>489</div></div>
<div class="td" style="left:395px;top:639px;width:120px;height:62px"><div>test1</div></div>
<div class="td" style="left:515px;top:639px;width:120px;height:62px"><div>SH513030</div></div>
<div class="td" style="left:635px;top:639px;width:120px;height:62px"><div></div></div>
<div class="td" style="left:755px;top:639px;width:120px;height:62px"><div>机器人刷单</div></div>
<div class="td" style="left:875px;top:639px;width:120px;height:62px"><div></div></div>
<div class="td" style="left:995px;top:639px;width:120px;height:62px"><div></div></div>
<div class="td" style="left:1115px;top:639px;width:120px;height:62px"><div><span style="color:#3d8cf0">查看信息</span></div></div>
<div class="td" style="left:1235px;top:639px;width:120px;height:62px"><div>182.78</div></div>
<div class="td" style="left:1355px;top:639px;width:120px;height:62px"><div></div></div>
<div class="td" style="left:1475px;top:639px;width:120px;height:62px"><div>182.78</div></div>
<div class="td" style="left:1595px;top:639px;width:120px;height:62px"><div>1</div></div>
<div class="abs opb" style="left:1728px;top:652px">操作</div>
<svg class="abs" style="left:1833px;top:666px;overflow:visible" width="11" height="6" viewBox="0 0 11 6"><polyline points="0.5,0.5 5.5,5.5 10.5,0.5" fill="none" stroke="#d8dcff" stroke-width="1"/></svg>
<div class="abs" style="left:266px;top:702px;width:1601px;height:63px;background:#fafafa;border-bottom:1px solid #ebeef5"></div>
<div class="td" style="left:266px;top:701px;width:129px;height:62px"><div>1674469615280930<br>817</div></div>
<div class="td" style="left:395px;top:702px;width:120px;height:62px"><div>testZL</div></div>
<div class="td" style="left:515px;top:702px;width:120px;height:62px"><div>SH513030</div></div>
<div class="td" style="left:635px;top:702px;width:120px;height:62px"><div></div></div>
<div class="td" style="left:755px;top:702px;width:120px;height:62px"><div>机器人刷单</div></div>
<div class="td" style="left:875px;top:702px;width:120px;height:62px"><div></div></div>
<div class="td" style="left:995px;top:702px;width:120px;height:62px"><div></div></div>
<div class="td" style="left:1115px;top:702px;width:120px;height:62px"><div><span style="color:#3d8cf0">查看信息</span></div></div>
<div class="td" style="left:1235px;top:702px;width:120px;height:62px"><div>182.78</div></div>
<div class="td" style="left:1355px;top:702px;width:120px;height:62px"><div></div></div>
<div class="td" style="left:1475px;top:702px;width:120px;height:62px"><div>182.78</div></div>
<div class="td" style="left:1595px;top:702px;width:120px;height:62px"><div>1</div></div>
<div class="abs opb" style="left:1728px;top:715px">操作</div>
<svg class="abs" style="left:1833px;top:729px;overflow:visible" width="11" height="6" viewBox="0 0 11 6"><polyline points="0.5,0.5 5.5,5.5 10.5,0.5" fill="none" stroke="#d8dcff" stroke-width="1"/></svg>
<div class="abs" style="left:266px;top:765px;width:1601px;height:63px;background:#fff;border-bottom:1px solid #ebeef5"></div>
<div class="td" style="left:266px;top:764px;width:129px;height:62px"><div>1673760384038756<br>353</div></div>
<div class="td" style="left:395px;top:765px;width:120px;height:62px"><div>1</div></div>
<div class="td" style="left:515px;top:765px;width:120px;height:62px"><div>SH513030</div></div>
<div class="td" style="left:635px;top:764px;width:120px;height:62px"><div>00992,SZ300750,<br>Meta公司</div></div>
<div class="td" style="left:755px;top:765px;width:120px;height:62px"><div>机器人刷单</div></div>
<div class="td" style="left:875px;top:765px;width:120px;height:62px"><div></div></div>
<div class="td" style="left:995px;top:765px;width:120px;height:62px"><div></div></div>
<div class="td" style="left:1115px;top:765px;width:120px;height:62px"><div><span style="color:#3d8cf0">查看信息</span></div></div>
<div class="td" style="left:1235px;top:765px;width:120px;height:62px"><div>182.78</div></div>
<div class="td" style="left:1355px;top:765px;width:120px;height:62px"><div></div></div>
<div class="td" style="left:1475px;top:765px;width:120px;height:62px"><div>182.78</div></div>
<div class="td" style="left:1595px;top:765px;width:120px;height:62px"><div>1</div></div>
<div class="abs opb" style="left:1728px;top:778px">操作</div>
<svg class="abs" style="left:1833px;top:792px;overflow:visible" width="11" height="6" viewBox="0 0 11 6"><polyline points="0.5,0.5 5.5,5.5 10.5,0.5" fill="none" stroke="#d8dcff" stroke-width="1"/></svg>
<div class="abs" style="left:266px;top:828px;width:1601px;height:86px;background:#fafafa;border-bottom:1px solid #ebeef5"></div>
<div class="td" style="left:266px;top:827px;width:129px;height:85px"><div>1673758737707327<br>489</div></div>
<div class="td" style="left:395px;top:827px;width:120px;height:85px"><div>1</div></div>
<div class="td" style="left:515px;top:827px;width:120px;height:85px"><div>SH513030</div></div>
<div class="td" style="left:635px;top:827px;width:120px;height:85px"><div>00992,00700,微<br>软,ATMOS能源,丰<br>田汽车,本田汽车</div></div>
<div class="td" style="left:755px;top:827px;width:120px;height:85px"><div>机器人刷单</div></div>
<div class="td" style="left:875px;top:827px;width:120px;height:85px"><div></div></div>
<div class="td" style="left:995px;top:827px;width:120px;height:85px"><div></div></div>
<div class="td" style="left:1115px;top:827px;width:120px;height:85px"><div><span style="color:#3d8cf0">查看信息</span></div></div>
<div class="td" style="left:1235px;top:827px;width:120px;height:85px"><div>182.78</div></div>
<div class="td" style="left:1355px;top:827px;width:120px;height:85px"><div></div></div>
<div class="td" style="left:1475px;top:827px;width:120px;height:85px"><div>182.78</div></div>
<div class="td" style="left:1595px;top:827px;width:120px;height:85px"><div>1</div></div>
<div class="abs opb" style="left:1728px;top:853px">操作</div>
<svg class="abs" style="left:1833px;top:867px;overflow:visible" width="11" height="6" viewBox="0 0 11 6"><polyline points="0.5,0.5 5.5,5.5 10.5,0.5" fill="none" stroke="#d8dcff" stroke-width="1"/></svg>
<div class="abs" style="left:266px;top:260px;width:1px;height:654px;background:#ebeef5"></div>
<div class="abs" style="left:395px;top:260px;width:1px;height:654px;background:#ebeef5"></div>
<div class="abs" style="left:515px;top:260px;width:1px;height:654px;background:#ebeef5"></div>
<div class="abs" style="left:635px;top:260px;width:1px;height:654px;background:#ebeef5"></div>
<div class="abs" style="left:755px;top:260px;width:1px;height:654px;background:#ebeef5"></div>
<div class="abs" style="left:875px;top:260px;width:1px;height:654px;background:#ebeef5"></div>
<div class="abs" style="left:995px;top:260px;width:1px;height:654px;background:#ebeef5"></div>
<div class="abs" style="left:1115px;top:260px;width:1px;height:654px;background:#ebeef5"></div>
<div class="abs" style="left:1235px;top:260px;width:1px;height:654px;background:#ebeef5"></div>
<div class="abs" style="left:1355px;top:260px;width:1px;height:654px;background:#ebeef5"></div>
<div class="abs" style="left:1475px;top:260px;width:1px;height:654px;background:#ebeef5"></div>
<div class="abs" style="left:1595px;top:260px;width:1px;height:654px;background:#ebeef5"></div>
<div class="abs" style="left:1715px;top:260px;width:1px;height:654px;background:#ebeef5"></div>
<div class="abs" style="left:1866px;top:260px;width:1px;height:654px;background:#ebeef5"></div>
<div class="abs" style="left:1716px;top:260px;width:1px;height:654px;background:#ebeef5"></div>
<div class="abs" style="left:832px;top:941px;width:100px;height:28px;border:1px solid #dcdfe6;border-radius:3px;background:#fff"></div>
<div class="abs" style="left:952px;top:941px;width:30px;height:28px;background:#f4f4f5;border-radius:2px"></div>
<div class="abs" style="left:992px;top:941px;width:30px;height:28px;background:#1e4dff;border-radius:2px"></div>
<div class="abs" style="left:1032px;top:941px;width:30px;height:28px;background:#f4f4f5;border-radius:2px"></div>
<div class="abs" style="left:1072px;top:941px;width:30px;height:28px;background:#f4f4f5;border-radius:2px"></div>
<div class="abs" style="left:1112px;top:941px;width:30px;height:28px;background:#f4f4f5;border-radius:2px"></div>
<div class="abs" style="left:1152px;top:941px;width:30px;height:28px;background:#f4f4f5;border-radius:2px"></div>
<div class="abs" style="left:1192px;top:941px;width:30px;height:28px;background:#f4f4f5;border-radius:2px"></div>
<div class="abs" style="left:1232px;top:941px;width:30px;height:28px;background:#f4f4f5;border-radius:2px"></div>
<div class="abs" style="left:1321px;top:941px;width:46px;height:28px;border:1px solid #dcdfe6;border-radius:3px;background:#fff"></div>
</body></html>
